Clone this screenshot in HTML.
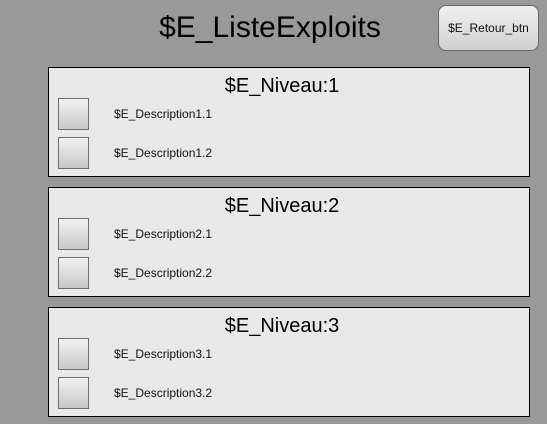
<!DOCTYPE html><html><head><style>
body{margin:0;width:547px;height:424px;background:#999;font-family:"Liberation Sans",sans-serif;position:relative;overflow:hidden}
.t{position:absolute;left:0;width:540px;text-align:center;top:11px;font-size:30px;color:#000}
.btn{position:absolute;left:438px;top:5px;width:99px;height:44px;border:1px solid #666;border-radius:8px;background:linear-gradient(#f0f0f0,#d0d0d0);font-size:12px;color:#111;display:flex;align-items:center;justify-content:center}
.p{position:absolute;left:48px;width:480px;height:108px;border:1px solid #000;background:#e8e8e8}
.h{position:absolute;top:7px;left:0;width:466px;text-align:center;font-size:20px}
.c{position:absolute;left:9px;width:29px;height:30px;border:1px solid #707070;background:linear-gradient(#f2f2f2,#c8c8c8)}
.d{position:absolute;left:65px;font-size:12px;color:#111}
</style></head><body>
<div class="t">$E_ListeExploits</div>
<div class="btn">$E_Retour_btn</div>
<div class="p" style="top:67px"><div class="h">$E_Niveau:1</div><div class="c" style="top:30px"></div><div class="d" style="top:39px">$E_Description1.1</div><div class="c" style="top:69px"></div><div class="d" style="top:78px">$E_Description1.2</div></div>
<div class="p" style="top:187px"><div class="h">$E_Niveau:2</div><div class="c" style="top:30px"></div><div class="d" style="top:39px">$E_Description2.1</div><div class="c" style="top:69px"></div><div class="d" style="top:78px">$E_Description2.2</div></div>
<div class="p" style="top:307px"><div class="h">$E_Niveau:3</div><div class="c" style="top:30px"></div><div class="d" style="top:39px">$E_Description3.1</div><div class="c" style="top:69px"></div><div class="d" style="top:78px">$E_Description3.2</div></div>
</body></html>
